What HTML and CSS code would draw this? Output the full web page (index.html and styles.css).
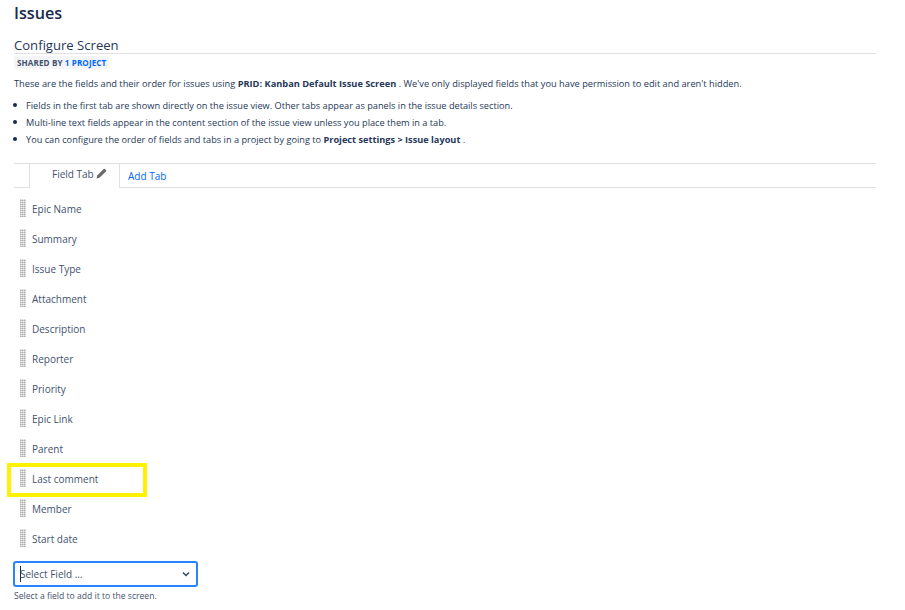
FILE: index.html
```html
<!DOCTYPE html>
<html lang="en">
<head>
<meta charset="utf-8">
<title>Issues</title>
<link rel="stylesheet" href="styles.css">
</head>
<body>
<main class="page">
  <h1 class="title">Issues</h1>
  <h2 class="subtitle">Configure Screen</h2>
  <div class="lozenge-row"><span class="lozenge">SHARED BY <a class="lozenge-link">1 PROJECT</a></span></div>
  <p class="intro">These are the fields and their order for issues using <b>PRID: Kanban Default Issue Screen</b> . We've only displayed fields that you have permission to edit and aren't hidden.</p>
  <ul class="notes">
    <li>Fields in the first tab are shown directly on the issue view. Other tabs appear as panels in the issue details section.</li>
    <li>Multi-line text fields appear in the content section of the issue view unless you place them in a tab.</li>
    <li>You can configure the order of fields and tabs in a project by going to <b>Project settings &gt; Issue layout</b> .</li>
  </ul>
  <div class="tabs">
    <div class="tab active">Field Tab
      <svg class="pencil" width="11" height="11" viewBox="0 0 11 11"><path d="M0.5 10.5l0.7-3L7.6 1.1a1 1 0 0 1 1.4 0l0.9 0.9a1 1 0 0 1 0 1.4L3.5 9.8z" fill="#6b6b6b"/></svg>
    </div>
    <div class="tab add">Add Tab</div>
  </div>
  <ul class="fields">
    <li class="field"><span class="grip"></span>Epic Name</li>
    <li class="field"><span class="grip"></span>Summary</li>
    <li class="field"><span class="grip"></span>Issue Type</li>
    <li class="field"><span class="grip"></span>Attachment</li>
    <li class="field"><span class="grip"></span>Description</li>
    <li class="field"><span class="grip"></span>Reporter</li>
    <li class="field"><span class="grip"></span>Priority</li>
    <li class="field"><span class="grip"></span>Epic Link</li>
    <li class="field"><span class="grip"></span>Parent</li>
    <li class="field highlighted"><span class="grip"></span>Last comment</li>
    <li class="field"><span class="grip"></span>Member</li>
    <li class="field"><span class="grip"></span>Start date</li>
  </ul>
  <div class="select">
    <span class="caret"></span><span class="select-text">Select Field ...</span>
    <svg class="chevron" width="8" height="6" viewBox="0 0 8 6"><path d="M1 1.5l3 3 3-3" fill="none" stroke="#344563" stroke-width="1.5"/></svg>
  </div>
  <p class="help">Select a field to add it to the screen.</p>
</main>
</body>
</html>
```
FILE: styles.css
```css
*, *::before, *::after { box-sizing: border-box; }
html, body { margin: 0; padding: 0; background: #fff; }
body {
  width: 905px;
  height: 610px;
  overflow: hidden;
  font-family: "Open Sans", "Noto Sans", sans-serif;
  font-size: 10px;
  color: #253858;
}
.page { padding: 0 29px 0 14px; }
.title { margin: 0; padding-top: 3px; font-size: 16.2px; line-height: 20px; font-weight: 600; color: #172b4d; }
.subtitle { margin: 13px 0 0; font-size: 13.1px; line-height: 19px; font-weight: 400; color: #253858; border-bottom: 1px solid #dfe1e6; height: 18px; }
.lozenge-row { margin-top: 2px; height: 13px; display: flex; }
.lozenge { display: block; background: #f4f5f7; border-radius: 2px; padding: 0 3px; font-size: 8.1px; line-height: 13px; font-weight: 700; letter-spacing: 0.1px; color: #42526e; }
.lozenge-link { color: #0065ff; }
.intro { margin: 8px 0 0; font-size: 9.25px; line-height: 14px; }
.notes { margin: 6px 0 0; padding: 0 0 0 12px; list-style: none; font-size: 9.2px; }
.notes li { position: relative; line-height: 17px; }
.notes li::before { content: ""; position: absolute; left: -13px; top: 6px; width: 4px; height: 4px; border-radius: 50%; background: #172b4d; }
.tabs { margin-top: 15px; height: 25px; display: flex; border-top: 1px solid #dfe1e6; border-bottom: 1px solid #dfe1e6; padding-left: 15px; font-size: 10px; }
.tab { height: 24px; }
.active { width: 91px; background: #fff; height: 24px; border-left: 1px solid #dfe1e6; border-right: 1px solid #dfe1e6; padding: 3px 0 0 22px; color: #42526e; line-height: 15px; }
.pencil { vertical-align: -1px; }
.add { padding: 5px 0 0 8px; color: #0065ff; line-height: 14px; }
.fields { list-style: none; margin: 6px 0 0; padding: 0; }
.field { position: relative; height: 30px; display: flex; align-items: center; padding-left: 6px; font-size: 10px; color: #42526e; }
.grip {
  width: 6px; height: 18px; margin-right: 6px; margin-top: -2px;
  background-image: repeating-linear-gradient(0deg, #d4d4d4 0 1px, #fff 1px 2px), repeating-linear-gradient(90deg, #d4d4d4 0 1px, #f2f2f2 1px 2px);
  background-blend-mode: multiply;
}
.highlighted::after { content: ""; position: absolute; left: -7px; top: -1px; width: 140px; height: 34px; border: 4px solid #fff200; }
.select { margin: 7px 0 0 -1px; width: 185px; height: 26px; border: 2px solid #2684ff; border-radius: 3px; display: flex; align-items: center; padding: 0 6px 0 5px; font-size: 10px; color: #42526e; }
.caret { width: 1px; height: 16px; background: #172b4d; flex: none; }
.select-text { margin-left: -1px; flex: 1; }
.help { margin: 3px 0 0; font-size: 8.6px; line-height: 12px; color: #42526e; }
```
